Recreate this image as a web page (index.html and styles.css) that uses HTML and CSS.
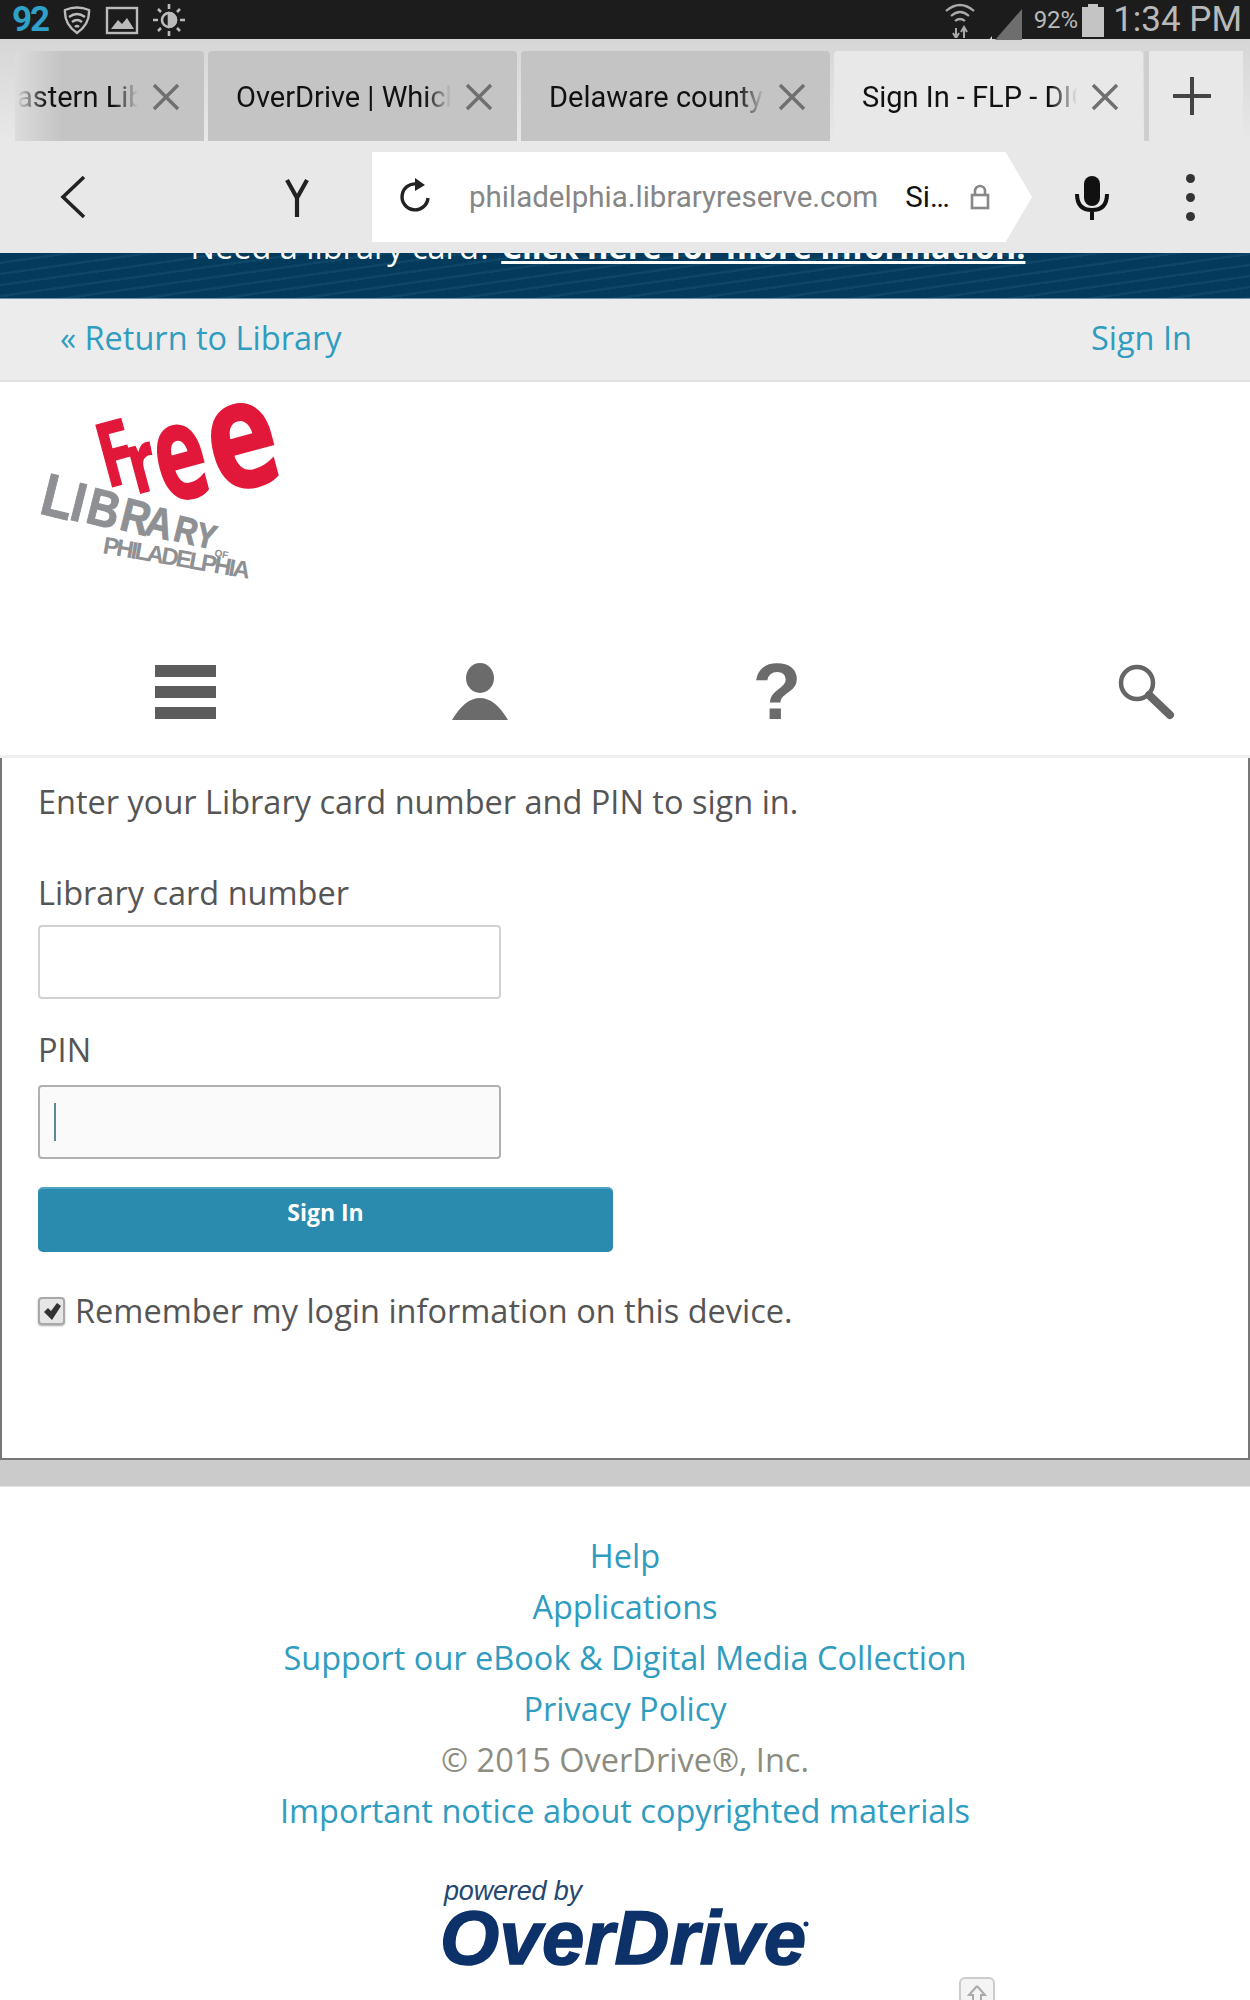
FILE: index.html
```html
<!DOCTYPE html>
<html lang="en">
<head>
    <meta charset="UTF-8">
    <meta name="viewport" content="width=device-width, initial-scale=1.0">
    <title>Sign In - FLP - Digital Media</title>
    <link rel="stylesheet" href="styles.css">
</head>
<body>
    <!-- phone status bar -->
    <div class="status-bar">
        <span class="status-num">92</span>
        <svg class="status-icon" width="30" height="30" viewBox="0 0 30 30" fill="none" stroke="#bbb" stroke-width="2.4">
            <path d="M3 5 Q15 0 27 5 Q28 19 15 28 Q2 19 3 5Z"/>
            <path d="M7 12 Q15 6 23 12"/>
            <path d="M10 17 Q15 13 20 17"/>
            <path d="M13 22 Q15 20 17 22"/>
        </svg>
        <svg class="status-icon" width="34" height="30" viewBox="0 0 34 30">
            <rect x="2" y="3" width="30" height="25" fill="none" stroke="#bbb" stroke-width="2.4"/>
            <path d="M6 24 L13 15 L17 19 L22 13 L29 24Z" fill="#bbb"/>
        </svg>
        <svg class="status-icon" width="34" height="34" viewBox="0 0 34 34" fill="none" stroke="#bbb" stroke-width="2.6">
            <circle cx="17" cy="17" r="7"/>
            <path d="M17 10 A7 7 0 0 1 17 24Z" fill="#bbb"/>
            <path d="M17 1V6M17 28V33M1 17H6M28 17H33M6 6L9 9M25 25L28 28M6 28L9 25M25 9L28 6"/>
        </svg>
        <div class="status-right">
            <svg width="32" height="36" viewBox="0 0 32 36" fill="none" stroke="#aaa" stroke-width="2.2">
                <path d="M2 9 Q16 -3 30 9"/>
                <path d="M7 14 Q16 6 25 14"/>
                <path d="M11 19 Q16 15 21 19"/>
                <path d="M12 26V36M9 31L12 36L15 31" stroke-width="2"/>
                <path d="M20 36V26M17 30L20 25L23 30" stroke-width="2"/>
            </svg>
            <svg class="signal" width="34" height="34" viewBox="0 0 34 34">
                <path d="M6 34 L33 3 V34Z" fill="#6e6e6e"/>
                <path d="M0 34 L3 30 V34Z" fill="#ddd"/>
            </svg>
            <span class="status-pct">92%</span>
            <span class="battery"></span>
            <span class="status-time">1:34 PM</span>
        </div>
    </div>

    <!-- browser tabs -->
    <div class="tabs">
        <div class="tab tab-first">
            <span class="tab-title">astern Library</span>
            <svg class="tab-close" width="28" height="28" viewBox="0 0 28 28"><path d="M2 2L26 26M26 2L2 26"/></svg>
        </div>
        <div class="tab">
            <span class="tab-title">OverDrive | Which</span>
            <svg class="tab-close" width="28" height="28" viewBox="0 0 28 28"><path d="M2 2L26 26M26 2L2 26"/></svg>
        </div>
        <div class="tab">
            <span class="tab-title">Delaware county</span>
            <svg class="tab-close" width="28" height="28" viewBox="0 0 28 28"><path d="M2 2L26 26M26 2L2 26"/></svg>
        </div>
        <div class="tab tab-active">
            <span class="tab-title">Sign In - FLP - DIGITAL</span>
            <svg class="tab-close" width="28" height="28" viewBox="0 0 28 28"><path d="M2 2L26 26M26 2L2 26"/></svg>
        </div>
        <div class="tab-new">
            <svg width="40" height="40" viewBox="0 0 40 40"><path d="M20 1V39M1 20H39" stroke="#444" stroke-width="4"/></svg>
        </div>
    </div>

    <!-- browser toolbar -->
    <div class="toolbar">
        <svg class="tool-back" width="28" height="44" viewBox="0 0 28 44" fill="none" stroke="#222" stroke-width="3.6"><path d="M25 2L4 22L25 42"/></svg>
        <svg class="tool-y" width="24" height="40" viewBox="0 0 24 40" fill="none" stroke="#222" stroke-width="4.2"><path d="M2 2L12 20L22 2M12 20V39"/></svg>
        <div class="url-bar">
            <svg class="url-reload" width="34" height="38" viewBox="0 0 34 38" fill="none" stroke="#222" stroke-width="3.4">
                <path d="M19 6 A13 13 0 1 0 30 20"/>
                <path d="M17 0L27 7L17 13Z" fill="#222" stroke="none"/>
            </svg>
            <span class="url-text">philadelphia.libraryreserve.com</span>
            <span class="url-title">Si…</span>
            <svg class="url-lock" width="20" height="26" viewBox="0 0 20 26" fill="none" stroke="#888" stroke-width="2.6"><rect x="2" y="11" width="16" height="13"/><path d="M5 11V7A5 5 0 0 1 15 7V11"/></svg>
        </div>
        <svg class="tool-mic" width="36" height="46" viewBox="0 0 36 46" fill="none" stroke="#111" stroke-width="4">
            <rect x="10" y="2" width="16" height="30" rx="8" fill="#111" stroke="none"/>
            <path d="M3 20 Q3 36 18 36 Q33 36 33 20M18 36V46"/>
        </svg>
        <div class="tool-dots"><span></span><span></span><span></span></div>
    </div>

    <!-- page -->
    <div class="banner">
        <p class="banner-text">Need a library card? <a href="#">Click here for more information.</a></p>
    </div>

    <div class="library-nav">
        <a href="#">« Return to Library</a>
        <a href="#">Sign In</a>
    </div>

    <header class="brand">
        <svg class="free-logo" width="250" height="180" viewBox="36 402 250 180">
            <g class="logo-red">
                <text transform="translate(107 488) rotate(-15) scale(.85 1.2)" font-size="74">F</text>
                <text transform="translate(136 494) rotate(-15) scale(1 1.4)" font-size="60">r</text>
                <text transform="translate(166 504) rotate(-15) scale(1.08 1.65)" font-size="80">e</text>
                <text transform="translate(220 495) rotate(-15) scale(1.18 1.5)" font-size="100">e</text>
            </g>
            <g class="logo-gray">
                <text transform="translate(38 513) rotate(14) scale(.86 1)" font-size="60">L</text>
                <text transform="translate(68 519) rotate(14) scale(.86 1)" font-size="55">I</text>
                <text transform="translate(84 522) rotate(14) scale(.86 1)" font-size="52">B</text>
                <text transform="translate(118 529) rotate(14) scale(.86 1)" font-size="47">R</text>
                <text transform="translate(143 534) rotate(14) scale(.86 1)" font-size="43">A</text>
                <text transform="translate(172 540) rotate(14) scale(.86 1)" font-size="37">R</text>
                <text transform="translate(194 545) rotate(14) scale(.86 1)" font-size="34">Y</text>
                <text class="logo-thin" transform="translate(102 553) rotate(10)" font-size="24" textLength="149">PHILADELPHIA</text>
                <text class="logo-thin" transform="translate(214 556) rotate(12)" font-size="10">OF</text>
            </g>
        </svg>
    </header>

    <nav class="icon-nav">
        <div class="nav-menu"><span></span><span></span><span></span></div>
        <svg class="nav-person" width="58" height="58" viewBox="0 0 58 58" fill="#6b6b6b">
            <ellipse cx="29" cy="15" rx="14" ry="15"/>
            <path d="M1 57 Q14 35 29 35 Q44 35 57 57Z"/>
        </svg>
        <span class="nav-help">?</span>
        <svg class="nav-search" width="60" height="58" viewBox="0 0 60 58" fill="none" stroke="#666">
            <circle cx="21" cy="20" r="16" stroke-width="4.5"/>
            <path d="M33 32L54 52" stroke-width="8" stroke-linecap="round"/>
        </svg>
    </nav>

    <main class="signin">
        <p class="signin-intro">Enter your Library card number and PIN to sign in.</p>
        <label class="field-label" for="card">Library card number</label>
        <input class="field" id="card" type="text">
        <label class="field-label field-label-pin" for="pin">PIN</label>
        <div class="field field-active"></div>
        <button class="signin-btn" type="button">Sign In</button>
        <div class="remember">
            <span class="remember-box">
                <svg width="20" height="20" viewBox="0 0 20 20"><path d="M2 11L6 7L9 10L15 2L19 5L10 19Z" fill="#333"/></svg>
            </span>
            <span>Remember my login information on this device.</span>
        </div>
    </main>
    <div class="band"></div>

    <footer class="site-footer">
        <a href="#">Help</a>
        <a href="#">Applications</a>
        <a href="#">Support our eBook &amp; Digital Media Collection</a>
        <a href="#">Privacy Policy</a>
        <span class="copyright">© 2015 OverDrive®, Inc.</span>
        <a href="#">Important notice about copyrighted materials</a>
        <svg class="overdrive-logo" width="380" height="100" viewBox="0 0 380 100">
            <text class="od-powered" x="4" y="26" font-size="27" textLength="138">powered by</text>
            <text class="od-name" x="0" y="90" font-size="76" textLength="366">OverDrive</text>
            <circle cx="366" cy="50" r="2.5" fill="#0d3169"/>
        </svg>
    </footer>

    <div class="to-top">
        <svg width="20" height="22" viewBox="0 0 20 22" fill="none" stroke="#aaa" stroke-width="2"><path d="M10 2L2 11H6V22M10 2L18 11H14V22"/></svg>
    </div>
</body>
</html>
```

FILE: styles.css
```css
* {
    margin: 0;
    padding: 0;
    box-sizing: border-box;
}

html, body {
    height: 2000px;
    overflow: hidden;
}

body {
    position: relative;
    width: 1250px;
    background: #fff;
    font-family: 'Open Sans', sans-serif;
    color: #555;
}

a {
    color: #2f9cc0;
    text-decoration: none;
}

/* status bar */
.status-bar {
    display: flex;
    align-items: center;
    height: 39px;
    padding-left: 12px;
    background: #1c1c1c;
    color: #b9b9b9;
    font-family: Roboto, sans-serif;
}

.status-num {
    width: 37px;
    font-size: 35px;
    font-weight: 700;
    letter-spacing: -2px;
    color: #2fa0c8;
}

.status-icon {
    margin-left: 13px;
}

.status-right {
    display: flex;
    align-items: center;
    margin-left: auto;
    padding-right: 8px;
}

.signal {
    margin-left: 13px;
    align-self: flex-end;
}

.status-pct {
    margin-left: 11px;
    font-size: 24px;
}

.battery {
    width: 22px;
    height: 30px;
    margin: 5px 0 0 4px;
    background: #c4c4c4;
    position: relative;
}

.battery::before {
    content: "";
    position: absolute;
    top: -3px;
    left: 6px;
    width: 10px;
    height: 3px;
    background: #c4c4c4;
}

.status-time {
    margin-left: 9px;
    font-size: 35px;
}

/* tabs */
.tabs {
    display: flex;
    gap: 4px;
    height: 102px;
    padding: 12px 6px 0 15px;
    background: linear-gradient(#d6d6d6, #e8e8e8);
}

.tab {
    display: flex;
    align-items: center;
    width: 309px;
    height: 90px;
    padding: 2px 24px 0 28px;
    border-radius: 4px 4px 0 0;
    background: #c4c4c4;
    color: #111;
    font-family: Roboto, sans-serif;
    font-size: 29px;
}

.tab-first {
    width: 189px;
    padding-left: 2px;
    background: linear-gradient(90deg, #dcdcdc, #c4c4c4 25%);
}

.tab-active {
    background: #e8e8e8;
}

.tab-title {
    flex: 1;
    white-space: nowrap;
    overflow: hidden;
    -webkit-mask-image: linear-gradient(90deg, #000 88%, transparent);
    mask-image: linear-gradient(90deg, #000 88%, transparent);
}

.tab-first .tab-title {
    -webkit-mask-image: linear-gradient(90deg, transparent, #000 25%, #000 80%, transparent);
    mask-image: linear-gradient(90deg, transparent, #000 25%, #000 80%, transparent);
}

.tab-close {
    flex: none;
    margin-left: 14px;
    fill: none;
    stroke: #6f6f6f;
    stroke-width: 3.4;
}

.tab-new {
    display: flex;
    align-items: center;
    justify-content: center;
    width: 99px;
    height: 90px;
    margin-left: -3px;
    padding-right: 8px;
    border-left: 5px solid #cfcfcf;
    background: #e8e8e8;
}

/* toolbar */
.toolbar {
    display: flex;
    align-items: center;
    height: 112px;
    padding-left: 59px;
    background: #e8e8e8;
}

.tool-y {
    margin-left: 198px;
    margin-top: 2px;
}

.url-bar {
    display: flex;
    align-items: center;
    width: 660px;
    height: 90px;
    margin-left: 63px;
    padding-left: 26px;
    background: #fff;
    clip-path: polygon(0 0, 96% 0, 100% 50%, 96% 100%, 0 100%);
    font-family: Roboto, sans-serif;
    font-size: 29.5px;
}

.url-text {
    margin-left: 37px;
    color: #868686;
}

.url-title {
    margin-left: 27px;
    color: #111;
}

.url-lock {
    margin-left: 20px;
}

.tool-mic {
    margin-left: 42px;
}

.tool-dots {
    display: flex;
    flex-direction: column;
    gap: 10px;
    margin-left: 76px;
}

.tool-dots span {
    width: 9px;
    height: 9px;
    border-radius: 50%;
    background: #333;
}

/* banner */
.banner {
    height: 46px;
    padding-right: 34px;
    overflow: hidden;
    background: repeating-linear-gradient(172deg, #043a5c 0, #043a5c 8px, #0e4668 9px, #0e4668 11px);
    border-bottom: 1px solid #6f93a8;
    text-align: center;
}

.banner-text {
    margin-top: -28px;
    color: #fff;
    font-size: 32.5px;
    line-height: 44px;
}

.banner-text a {
    color: #fff;
    font-weight: 700;
    text-decoration: underline;
}

/* return to library */
.library-nav {
    display: flex;
    justify-content: space-between;
    align-items: center;
    height: 83px;
    padding: 0 58px 4px 60px;
    background: #ececec;
    border-bottom: 2px solid #e2e2e2;
    font-size: 32.5px;
}

.brand {
    height: 265px;
    padding: 20px 0 0 36px;
}

.free-logo {
    display: block;
}

.logo-red text {
    font-family: 'Open Sans', sans-serif;
    font-weight: 700;
    fill: #e2183a;
    stroke: #e2183a;
    stroke-width: 1.4;
}

.logo-gray text {
    font-family: 'Liberation Sans', sans-serif;
    font-weight: 700;
    fill: #8e9093;
    stroke: #8e9093;
    stroke-width: 1;
}

.logo-gray .logo-thin {
    stroke-width: 0;
}

/* icon row */
.icon-nav {
    display: flex;
    align-items: center;
    height: 111px;
    padding: 0 74px 19px 155px;
    border-bottom: 3px solid #efefef;
}

.nav-menu {
    display: flex;
    flex-direction: column;
    gap: 9px;
    width: 61px;
}

.nav-menu span {
    height: 12px;
    background: #5c5c5c;
}

.nav-person {
    margin-left: 235px;
}

.nav-help {
    width: 50px;
    margin-left: 243px;
    text-align: center;
    color: #6b6b6b;
    font-family: 'Liberation Sans', sans-serif;
    font-size: 80px;
    font-weight: 700;
    line-height: 58px;
}

.nav-search {
    margin-left: auto;
}

/* sign in form */
.signin {
    display: flex;
    flex-direction: column;
    align-items: flex-start;
    height: 702px;
    padding: 21px 36px 0;
    border: solid #777;
    border-width: 0 2px 2px;
    font-size: 32.5px;
}

.signin-intro {
    line-height: 46px;
}

.field-label {
    margin-top: 45px;
    line-height: 46px;
}

.field-label-pin {
    margin-top: 28px;
}

.field {
    width: 463px;
    height: 74px;
    margin-top: 9px;
    border: 2px solid #d2d2d2;
    border-radius: 4px;
    background: #fff;
}

.field-active {
    position: relative;
    margin-top: 12px;
    border-color: #b0b0b0;
    background: #fafafa;
}

.field-active::after {
    content: "";
    position: absolute;
    top: 16px;
    left: 14px;
    width: 2px;
    height: 38px;
    background: #5b8a96;
}

.signin-btn {
    width: 575px;
    height: 65px;
    margin-top: 28px;
    padding-bottom: 18px;
    border: none;
    border-top: 2px solid #4fa5c4;
    border-radius: 5px;
    background: #2a8bae;
    color: #fff;
    font-family: 'Open Sans', sans-serif;
    font-size: 23px;
    font-weight: 700;
}

.remember {
    display: flex;
    align-items: center;
    gap: 10px;
    margin-top: 36px;
    line-height: 46px;
}

.remember-box {
    display: flex;
    align-items: center;
    justify-content: center;
    width: 27px;
    height: 28px;
    border: 2px solid #a9a9a9;
    border-radius: 4px;
    background: #e6e6e6;
    box-shadow: 0 1px 2px #aaa;
}

.band {
    height: 27px;
    background: #cbcbcb;
    border-bottom: 1px solid #e4e4e4;
}

/* footer */
.site-footer {
    display: flex;
    flex-direction: column;
    align-items: center;
    padding-top: 43px;
    font-size: 32.5px;
    line-height: 51px;
}

.copyright {
    color: #8c8c80;
}

.overdrive-logo {
    margin-top: 38px;
    margin-left: 10px;
}

.od-powered {
    font-family: 'Liberation Sans', sans-serif;
    font-style: italic;
    fill: #24486f;
}

.od-name {
    font-family: 'Liberation Sans', sans-serif;
    font-style: italic;
    font-weight: 700;
    fill: #0d3169;
    stroke: #0d3169;
    stroke-width: 1.6;
}

.to-top {
    position: absolute;
    left: 959px;
    top: 1977px;
    display: flex;
    justify-content: center;
    width: 36px;
    height: 40px;
    padding-top: 5px;
    border: 2px solid #ccc;
    border-radius: 6px;
    background: #f4f4f4;
}
```
